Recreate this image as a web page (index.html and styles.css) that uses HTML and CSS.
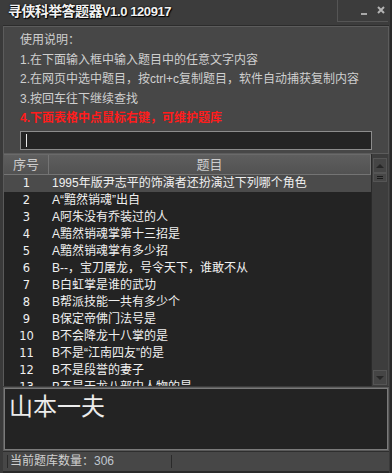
FILE: index.html
```html
<!DOCTYPE html>
<html>
<head>
<meta charset="utf-8">
<link rel="stylesheet" href="styles.css">
</head>
<body>
<div class="window">
  <div class="titlebar">
    <div class="title">寻侠科举答题器<span class="ver">V1.0 120917</span></div>
    <div class="winctl">
      <span class="min"></span>
      <svg class="close" width="8" height="8" viewBox="0 0 8 8"><path d="M1 1L7 7M7 1L1 7" stroke="#b4b4b4" stroke-width="2"/></svg>
    </div>
  </div>
  <div class="body">
    <div class="help">
      <p>使用说明：</p>
      <p>1.在下面输入框中输入题目中的任意文字内容</p>
      <p>2.在网页中选中题目，按ctrl+c复制题目，软件自动捕获复制内容</p>
      <p>3.按回车往下继续查找</p>
      <p class="warn">4.下面表格中点鼠标右键，可维护题库</p>
      <div class="input"><span class="caret"></span></div>
    </div>
    <div class="table">
      <div class="grid">
        <div class="head"><div class="c1">序号</div><div class="c2">题目</div></div>
        <div class="rows">
          <div class="row sel"><div class="c1">1</div><div class="c2">1995年版尹志平的饰演者还扮演过下列哪个角色</div></div>
          <div class="row"><div class="c1">2</div><div class="c2">A“黯然销魂”出自</div></div>
          <div class="row"><div class="c1">3</div><div class="c2">A阿朱没有乔装过的人</div></div>
          <div class="row"><div class="c1">4</div><div class="c2">A黯然销魂掌第十三招是</div></div>
          <div class="row"><div class="c1">5</div><div class="c2">A黯然销魂掌有多少招</div></div>
          <div class="row"><div class="c1">6</div><div class="c2">B--，宝刀屠龙，号令天下，谁敢不从</div></div>
          <div class="row"><div class="c1">7</div><div class="c2">B白虹掌是谁的武功</div></div>
          <div class="row"><div class="c1">8</div><div class="c2">B帮派技能一共有多少个</div></div>
          <div class="row"><div class="c1">9</div><div class="c2">B保定帝佛门法号是</div></div>
          <div class="row"><div class="c1">10</div><div class="c2">B不会降龙十八掌的是</div></div>
          <div class="row"><div class="c1">11</div><div class="c2">B不是“江南四友”的是</div></div>
          <div class="row"><div class="c1">12</div><div class="c2">B不是段誉的妻子</div></div>
          <div class="row"><div class="c1">13</div><div class="c2">B不是天龙八部中人物的是</div></div>
        </div>
      </div>
      <div class="vscroll">
        <div class="sbtn"><span class="up"></span></div>
        <div class="thumb"><span></span></div>
        <div class="track"></div>
        <div class="sbtn"><span class="down"></span></div>
      </div>
    </div>
    <div class="answer">山本一夫</div>
  </div>
  <div class="status">
    <div class="cell">当前题库数量：<span class="num">306</span></div>
  </div>
</div>
</body>
</html>
```

FILE: styles.css
```css
* { box-sizing: border-box; }
html, body { margin: 0; padding: 0; }
body {
  width: 392px;
  height: 473px;
  overflow: hidden;
  background: #3a3a3a;
  font-family: "Liberation Sans", "Noto Sans CJK SC", sans-serif;
  font-size: 12px;
  color: #d2d2d2;
}
.window {
  width: 392px;
  height: 473px;
  display: flex;
  flex-direction: column;
  border-right: 2px solid #2a2a2a;
}
.titlebar {
  height: 25px;
  flex: none;
  display: flex;
  align-items: flex-start;
  background: #3c3c3c;
}
.title {
  padding: 3px 0 0 8px;
  font-size: 14px;
  line-height: 16px;
  font-weight: bold;
  color: #f2f2f2;
  letter-spacing: -0.6px;
  text-shadow: 0 0 2px #000, 1px 1px 1px #000;
}
.ver { font-size: 13px; letter-spacing: -0.4px; }
.winctl {
  margin-left: auto;
  width: 51px;
  height: 22px;
  margin-right: 2px;
  border-left: 1px solid #555;
  border-bottom: 1px solid #555;
  display: flex;
  align-items: center;
  gap: 10px;
  padding: 0 0 0 23px;
}
.min {
  width: 6px;
  height: 2px;
  background: #a8a8a8;
  margin-top: 6px;
}
.close { margin-top: -1px; }
.body {
  flex: 1;
  display: flex;
  flex-direction: column;
  margin: 0 1px 0 3px;
  border-top: 1px solid #2c2c2c;
}
.help {
  height: 128px;
  flex: none;
  background: #474747;
  border: 1px solid #5c5c5c;
  padding: 4px 0 0 16px;
}
.help p {
  margin: 0;
  line-height: 19.5px;
  color: #cfcfcf;
}
.help p.warn {
  color: #ff1c1c;
  font-weight: bold;
}
.input {
  margin-top: 2px;
  width: 352px;
  height: 19px;
  background: #242424;
  border: 1px solid #8c8c8c;
  padding: 2px 0 0 5px;
}
.caret {
  display: block;
  width: 1px;
  height: 13px;
  background: #e8e8e8;
}
.table {
  height: 232px;
  flex: none;
  display: flex;
  background: #232323;
  border-left: 1px solid #5a5a5a;
}
.grid {
  flex: 1;
  display: flex;
  flex-direction: column;
  overflow: hidden;
}
.head {
  height: 21px;
  flex: none;
  display: flex;
  background: linear-gradient(#5e5e5e, #525252);
  border-top: 1px solid #6a6a6a;
  border-bottom: 1px solid #747474;
  color: #cdcdcd;
  font-size: 13px;
  line-height: 19px;
}
.head .c1 {
  width: 45px;
  text-align: center;
  border-right: 1px solid #747474;
}
.head .c2 {
  flex: 1;
  text-align: center;
  border-right: 1px solid #747474;
}
.rows { flex: 1; overflow: hidden; }
.row {
  height: 17px;
  display: flex;
  line-height: 17px;
  color: #f0f0f0;
  white-space: nowrap;
}
.row.sel { background: #4b4b4b; }
.row .c1 { width: 45px; text-align: center; font-family: "DejaVu Sans", sans-serif; font-size: 11.5px; }
.row .c2 { flex: 1; padding-left: 3px; }
.vscroll {
  width: 18px;
  flex: none;
  background: #3d3d3d;
  border-left: 1px solid #2a2a2a;
  border-right: 1px solid #4a4a4a;
  display: flex;
  flex-direction: column;
  padding: 4px 1px 1px 1px;
}
.sbtn {
  height: 15px;
  flex: none;
  background: #454545;
  border: 1px solid #555;
  display: flex;
  align-items: center;
  justify-content: center;
}
.up {
  width: 0; height: 0;
  border-left: 4px solid transparent;
  border-right: 4px solid transparent;
  border-bottom: 4px solid #262626;
}
.down {
  width: 0; height: 0;
  border-left: 4px solid transparent;
  border-right: 4px solid transparent;
  border-top: 4px solid #262626;
}
.thumb {
  height: 9px;
  flex: none;
  background: #474747;
  border: 1px solid #555;
  display: flex;
  align-items: center;
  justify-content: center;
}
.thumb span {
  width: 6px;
  height: 3px;
  border-top: 1px solid #1a1a1a;
  border-bottom: 1px solid #1a1a1a;
}
.track { flex: 1; }
.answer {
  height: 64px;
  flex: none;
  margin-top: 1px;
  background: #232323;
  border: 1px solid #5a5a5a;
  box-shadow: inset 0 0 0 1px #7a7a7a;
  padding: 3px 0 0 5px;
  font-size: 24px;
  line-height: 28px;
  color: #ececec;
  font-family: "Noto Sans CJK SC", sans-serif;
}
.status {
  flex: 1;
  background: #474747;
  border-top: 1px solid #2e2e2e;
  border-bottom: 2px solid #2a2a2a;
  margin: 0 1px 0 3px;
  display: flex;
  align-items: center;
  padding-left: 4px;
}
.cell {
  width: 165px;
  height: 13px;
  line-height: 13px;
  border-left: 1px solid #2a2a2a;
  border-right: 1px solid #2a2a2a;
  padding-left: 2px;
  color: #d0d0d0;
}
.num { color: #c0c8d0; }
```
